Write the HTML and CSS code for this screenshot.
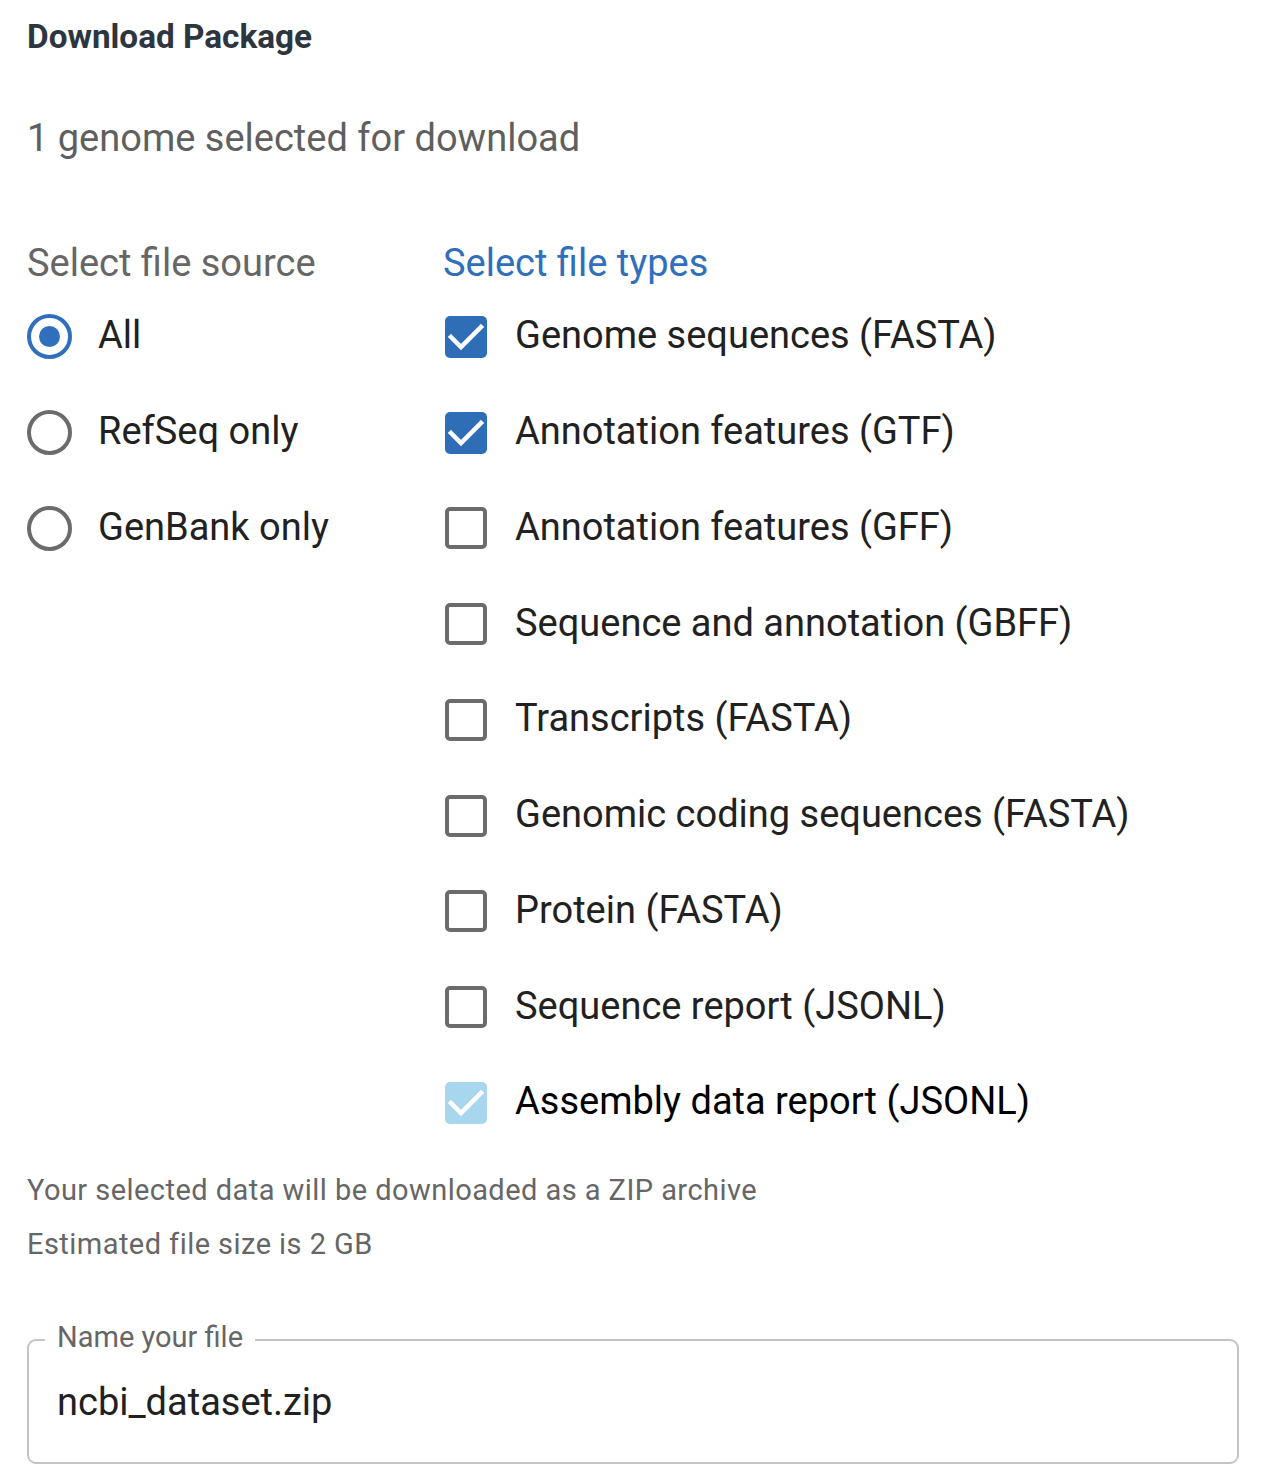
FILE: index.html
```html
<!DOCTYPE html>
<html lang="en">
<head>
<meta charset="utf-8">
<title>Download Package</title>
<link rel="stylesheet" href="styles.css">
</head>
<body>
<div class="panel">
  <h1 class="title">Download Package</h1>
  <p class="subtitle">1 genome selected for download</p>

  <div class="columns">
    <div class="col-source">
      <div class="col-heading">Select file source</div>
      <label class="option">
        <span class="radio radio-on"><span class="radio-dot"></span></span>
        <span class="option-label">All</span>
      </label>
      <label class="option">
        <span class="radio"></span>
        <span class="option-label">RefSeq only</span>
      </label>
      <label class="option">
        <span class="radio"></span>
        <span class="option-label">GenBank only</span>
      </label>
    </div>

    <div class="col-types">
      <div class="col-heading col-heading-blue">Select file types</div>
      <label class="option">
        <span class="check check-on"><svg viewBox="0 0 42 42" class="tick"><path d="M6 21 L16 31 L36 11"/></svg></span>
        <span class="option-label">Genome sequences (FASTA)</span>
      </label>
      <label class="option">
        <span class="check check-on"><svg viewBox="0 0 42 42" class="tick"><path d="M6 21 L16 31 L36 11"/></svg></span>
        <span class="option-label">Annotation features (GTF)</span>
      </label>
      <label class="option">
        <span class="check"></span>
        <span class="option-label">Annotation features (GFF)</span>
      </label>
      <label class="option">
        <span class="check"></span>
        <span class="option-label">Sequence and annotation (GBFF)</span>
      </label>
      <label class="option">
        <span class="check"></span>
        <span class="option-label">Transcripts (FASTA)</span>
      </label>
      <label class="option">
        <span class="check"></span>
        <span class="option-label">Genomic coding sequences (FASTA)</span>
      </label>
      <label class="option">
        <span class="check"></span>
        <span class="option-label">Protein (FASTA)</span>
      </label>
      <label class="option">
        <span class="check"></span>
        <span class="option-label">Sequence report (JSONL)</span>
      </label>
      <label class="option">
        <span class="check check-disabled"><svg viewBox="0 0 42 42" class="tick"><path d="M6 21 L16 31 L36 11"/></svg></span>
        <span class="option-label option-label-black">Assembly data report (JSONL)</span>
      </label>
    </div>
  </div>

  <p class="note">Your selected data will be downloaded as a ZIP archive</p>
  <p class="note note-second">Estimated file size is 2 GB</p>

  <fieldset class="field">
    <legend class="field-legend">Name your file</legend>
    <div class="field-value">ncbi_dataset.zip</div>
  </fieldset>
</div>
</body>
</html>
```

FILE: styles.css
```css
html, body {
  margin: 0;
  padding: 0;
  background: #ffffff;
}

body {
  font-family: Roboto, "Liberation Sans", Arial, sans-serif;
  color: #212121;
}

.panel {
  padding: 16px 29px 0 27px;
}

.title {
  margin: 0;
  font-size: 33.3px;
  line-height: 42px;
  font-weight: 700;
  color: #2d3540;
}

.subtitle {
  margin: 56px 0 0 0;
  font-size: 38px;
  line-height: 48px;
  color: #5f5f5f;
}

.columns {
  display: flex;
  margin-top: 77px;
}

.col-source {
  width: 416px;
  display: flex;
  flex-direction: column;
}

.col-types {
  flex: 1;
  display: flex;
  flex-direction: column;
}

.col-heading {
  font-size: 38px;
  line-height: 48px;
  color: #666666;
  margin-bottom: 2px;
}

.col-heading-blue {
  color: #2f6fbb;
}

.option {
  display: flex;
  align-items: center;
  height: 95.75px;
}

.option-label {
  font-size: 38px;
  line-height: 48px;
  color: #212121;
  padding-bottom: 3px;
}

.option-label-black {
  color: #000000;
}

.radio {
  box-sizing: border-box;
  width: 45px;
  height: 45px;
  border-radius: 50%;
  border: 4px solid #6b6b6b;
  display: flex;
  align-items: center;
  justify-content: center;
  margin-right: 26px;
  flex: none;
}

.radio-on {
  border-color: #2f6fbb;
}

.radio-dot {
  width: 21px;
  height: 21px;
  border-radius: 50%;
  background: #2f6fbb;
}

.check {
  box-sizing: border-box;
  width: 42px;
  height: 42px;
  border-radius: 5px;
  border: 4px solid #6b6b6b;
  margin-left: 2px;
  margin-right: 28px;
  flex: none;
  display: flex;
  align-items: center;
  justify-content: center;
}

.check-on {
  border: none;
  background: #2f6db6;
}

.check-disabled {
  border: none;
  background: #a8d6ee;
}

.tick {
  width: 42px;
  height: 42px;
  display: block;
}

.tick path {
  fill: none;
  stroke: #ffffff;
  stroke-width: 4.5;
  stroke-linecap: square;
}

.note {
  margin: 0;
  font-size: 29px;
  line-height: 40px;
  letter-spacing: 0.45px;
  color: #666666;
}

.columns + .note {
  margin-top: 19px;
}

.note-second {
  margin-top: 14px;
}

.field {
  margin: 58px 0 0 0;
  padding: 0 28px 36px 28px;
  border: 2px solid #c4c4c4;
  border-radius: 9px;
  min-width: 0;
}

.field-legend {
  padding: 0 12px 6px 12px;
  margin-left: -12px;
  font-size: 29px;
  line-height: 30px;
  color: #666666;
}

.field-value {
  font-size: 38px;
  line-height: 48px;
  color: #212121;
  padding-top: 20px;
}
```
